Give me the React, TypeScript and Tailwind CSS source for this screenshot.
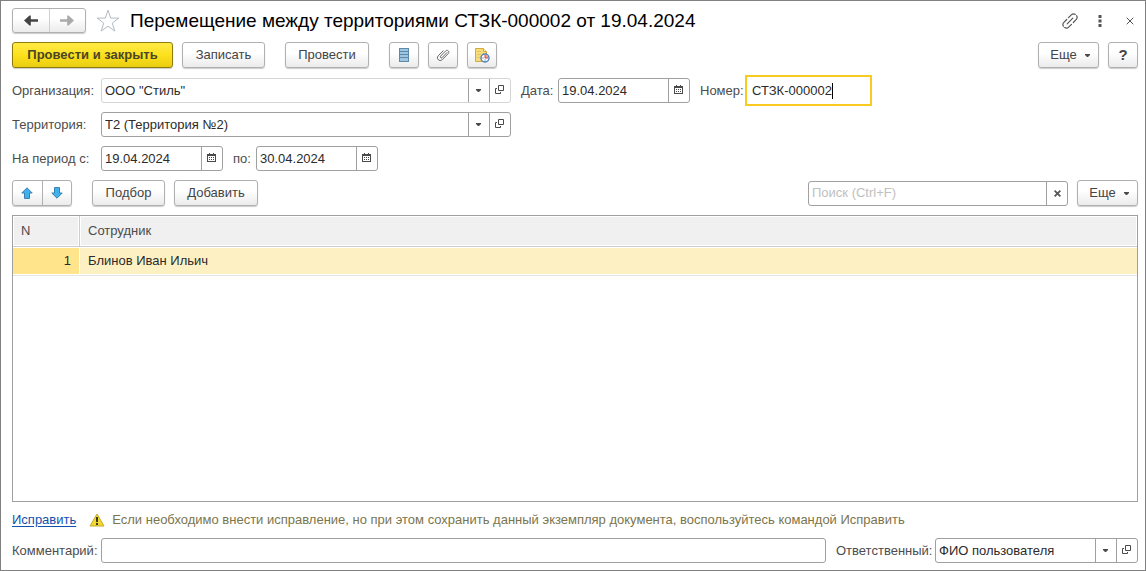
import type { ReactNode } from "react";
import { useState } from "react";
import clsx from "clsx";

type ButtonProps = {
  children: ReactNode;
  className?: string;
  label?: string;
  primary?: boolean;
};

type FieldProps = {
  id: string;
  label: string;
  value?: string;
  className?: string;
  labelClassName?: string;
  light?: boolean;
  children?: ReactNode;
};

const employees = [{ id: 1, name: "Блинов Иван Ильич" }];

function Button({ children, className, label, primary }: ButtonProps) {
  return (
    <button
      type="button"
      aria-label={label}
      className={clsx(
        "flex h-[26px] shrink-0 items-center justify-center whitespace-nowrap rounded-[3px] border shadow-[0_1px_1px_rgba(0,0,0,0.2)]",
        primary
          ? "border-[#8f7a0c] bg-linear-to-b from-[#ffea45] via-[#fde11c] to-[#e9cd12] font-bold text-[#4a4523]"
          : "border-[#b0b0b0] bg-linear-to-b from-white from-40% to-[#ebebeb] text-[#444]",
        className
      )}
    >
      {children}
    </button>
  );
}

function Field({ id, label, value = "", className, labelClassName, light, children }: FieldProps) {
  const [text, setText] = useState(value);

  return (
    <>
      <label htmlFor={id} className={clsx("shrink-0 whitespace-nowrap text-[#4c4c4c]", labelClassName)}>
        {label}
      </label>
      <div
        className={clsx(
          "flex h-[25px] rounded-[3px] border bg-white",
          light ? "border-[#d4d4d4]" : "border-[#a0a0a0]",
          className
        )}
      >
        <input
          id={id}
          type="text"
          value={text}
          onChange={(event) => setText(event.target.value)}
          className="min-w-0 flex-1 bg-transparent px-[3px] text-[#2b2b2b] outline-none"
        />
        {children}
      </div>
    </>
  );
}

function FieldButton({ label, children }: { label: string; children: ReactNode }) {
  return (
    <button
      type="button"
      aria-label={label}
      className="flex w-[21px] shrink-0 items-center justify-center border-l border-[#a0a0a0]"
    >
      {children}
    </button>
  );
}

function CaretIcon() {
  return (
    <svg width="6" height="3" viewBox="0 0 6 3" fill="#4a4a4a">
      <path d="M0 0h5v1L3 3H2L0 1z" />
    </svg>
  );
}

function OpenIcon() {
  return (
    <svg width="10" height="11" viewBox="0 0 10 11" fill="none" stroke="#4a4a4a">
      <path d="M3.500 .5h5v5h-5z" />
      <path d="M2 3.500H.5v5h5V7" />
    </svg>
  );
}

function CalendarIcon() {
  return (
    <svg width="10" height="11" viewBox="0 0 10 11" shapeRendering="crispEdges">
      <path d="M0 1h9v8H0zM2 0h1v1H2zM6 0h1v1H6z" fill="#4a4a4a" />
      <path d="M1 3h7v5H1z" fill="#fff" />
      <path d="M2 4h1v1H2zM4 4h1v1H4zM6 4h1v1H6zM2 6h1v1H2zM4 6h1v1H4zM6 6h1v1H6z" fill="#4a4a4a" />
    </svg>
  );
}

function ArrowIcon({ color, flip }: { color: string; flip?: boolean }) {
  return (
    <svg width="14" height="11" viewBox="0 0 14 11" fill={color} className={clsx(flip && "rotate-180")}>
      <path d="M0 5.500L5.500 .5h1.300V4.200H14v2.600H6.800v3.700H5.500z" />
    </svg>
  );
}

function MoveIcon({ flip }: { flip?: boolean }) {
  return (
    <svg width="12" height="12" viewBox="0 0 12 12" className={clsx(flip && "rotate-180")}>
      <path
        d="M6 .8l5.200 5.200H8.500v5.400h-5V6H.8z"
        fill="#3fb2ee"
        stroke="#3a7fae"
        strokeLinejoin="round"
      />
    </svg>
  );
}

function StarIcon() {
  return (
    <svg width="24" height="24" viewBox="0 0 24 24" fill="none" stroke="#b4bac0">
      <path d="M12 1.200l2.700 7.900h8.100l-6.500 5 2.500 7.900L12 17.200 5.200 22l2.500-7.900-6.500-5h8.100z" />
    </svg>
  );
}

function LinkIcon() {
  return (
    <svg width="16" height="16" viewBox="0 0 16 16" fill="none" stroke="#555" strokeWidth="1.200" strokeLinecap="round">
      <path d="M5.200 10.800l5.600-5.600" />
      <path d="M6.500 4.700l2.800-2.800c1.200-1.200 2.600-1.300 4-.5M14.600 2.700c.8 1.400.7 2.800-.5 4L11.300 9.500" />
      <path d="M9.500 11.300l-2.800 2.800c-1.200 1.200-2.600 1.300-4 .5M1.400 13.300c-.8-1.400-.7-2.800.5-4L4.700 6.500" />
    </svg>
  );
}

function CloseIcon({ size, width }: { size: number; width: number }) {
  return (
    <svg width={size} height={size} viewBox="0 0 8 8" stroke="#555" strokeWidth={width}>
      <path d="M.7 .7l6.600 6.600M7.300 .7L.7 7.300" />
    </svg>
  );
}

function ListIcon() {
  return (
    <svg width="10" height="14" viewBox="0 0 10 14" shapeRendering="crispEdges">
      <path d="M0 0h10v14H0z" fill="#5c8aab" />
      <path d="M1 1h8v2H1zM1 4h8v2H1zM1 7h8v2H1zM1 10h8v3H1z" fill="#a0c6df" />
    </svg>
  );
}

function ClipIcon() {
  return (
    <svg width="14" height="14" viewBox="0 0 14 14" fill="none" stroke="#666" strokeLinecap="round">
      <path d="M11 4.500L6 9.700c-.8.800-2.300-.6-1.500-1.500l5.200-5.300c1.700-1.700 4.300.8 2.600 2.600l-6 6.100c-2.700 2.700-6.700-1.100-4-3.900L7 2.900" />
    </svg>
  );
}

function ReportIcon() {
  return (
    <svg width="16" height="16" viewBox="0 0 16 16">
      <path d="M1.500 1.500h8l3 3v10h-11z" fill="#f8dc7c" stroke="#d3aa3c" />
      <path d="M9.500 1.500v3h3" fill="#fff3c0" stroke="#d3aa3c" />
      <path d="M3 4.500h4M3 7.500h4M3 10.500h3" stroke="#e3c465" />
      <circle cx="11" cy="11" r="4" fill="#fff" stroke="#4a7fb5" strokeWidth="1.400" />
      <path d="M11 11V7.800A3.200 3.200 0 0 1 14.200 11z" fill="#f3a39b" />
      <path d="M11 8v3h3" fill="none" stroke="#d8483c" />
      <path d="M8.500 11h1M11 12.500v1" stroke="#335f9a" />
    </svg>
  );
}

function WarningIcon() {
  return (
    <svg width="16" height="14" viewBox="0 0 16 14">
      <path d="M8 1l7 12H1z" fill="#f3d82f" stroke="#c5a92b" strokeLinejoin="round" />
      <path d="M7 4h2v5H7zM7 10h2v2H7z" fill="#3b3827" />
    </svg>
  );
}

function LookupButtons() {
  return (
    <>
      <FieldButton label="Выбрать">
        <CaretIcon />
      </FieldButton>
      <FieldButton label="Открыть">
        <OpenIcon />
      </FieldButton>
    </>
  );
}

function DateButton() {
  return (
    <FieldButton label="Календарь">
      <CalendarIcon />
    </FieldButton>
  );
}

function MoreButton() {
  return (
    <Button className="w-[61px] gap-2 pl-1">
      Еще
      <CaretIcon />
    </Button>
  );
}

function TitleBar() {
  return (
    <header className="mb-[9px] flex h-[25px] items-center">
      <div className="flex h-[25px] w-[74px] shrink-0 rounded-[3px] border border-[#b0b0b0] bg-linear-to-b from-white from-40% to-[#ebebeb] shadow-[0_1px_1px_rgba(0,0,0,0.2)]">
        <button type="button" aria-label="Назад" className="flex flex-1 items-center justify-center">
          <ArrowIcon color="#444" />
        </button>
        <button
          type="button"
          aria-label="Вперед"
          className="flex flex-1 items-center justify-center border-l border-[#d0d0d0]"
        >
          <ArrowIcon color="#aaa" flip />
        </button>
      </div>
      <button type="button" aria-label="Добавить в избранное" className="mx-[10px] shrink-0">
        <StarIcon />
      </button>
      <h1 className="min-w-0 flex-1 truncate text-[19px] leading-6 text-black">
        Перемещение между территориями СТЗК-000002 от 19.04.2024
      </h1>
      <div className="flex shrink-0 items-center pr-1">
        <button type="button" aria-label="Получить ссылку">
          <LinkIcon />
        </button>
        <button type="button" aria-label="Меню" className="mr-6 ml-5">
          <svg width="4" height="12" viewBox="0 0 4 12" fill="#555">
            <path d="M.5 0h3v3h-3zM.5 4.500h3v3h-3zM.5 9h3v3h-3z" />
          </svg>
        </button>
        <button type="button" aria-label="Закрыть">
          <CloseIcon size={8} width={1} />
        </button>
      </div>
    </header>
  );
}

function CommandBar() {
  return (
    <div className="mb-[10px] flex items-center">
      <Button primary className="w-[161px]">
        Провести и закрыть
      </Button>
      <Button className="ml-[9px] w-[83px]">Записать</Button>
      <Button className="mx-5 w-[84px]">Провести</Button>
      <div className="flex gap-[9px]">
        <Button label="Движения документа" className="w-[30px]">
          <ListIcon />
        </Button>
        <Button label="Присоединенные файлы" className="w-[30px]">
          <ClipIcon />
        </Button>
        <Button label="История" className="w-[30px]">
          <ReportIcon />
        </Button>
      </div>
      <div className="ml-auto flex gap-[9px]">
        <MoreButton />
        <Button className="w-[30px] text-[15px] font-bold text-[#222]">?</Button>
      </div>
    </div>
  );
}

function NumberField() {
  const [number, setNumber] = useState("СТЗК-000002");

  return (
    <>
      <label htmlFor="number" className="ml-[10px] w-12 shrink-0 whitespace-nowrap text-[#4c4c4c]">
        Номер:
      </label>
      <div className="relative flex h-[25px] w-[121px] items-center outline-2 outline-offset-1 outline-[#f9cb20]">
        <input
          id="number"
          type="text"
          value={number}
          onChange={(event) => setNumber(event.target.value)}
          className="w-full bg-transparent px-1 text-[#2b2b2b] caret-transparent outline-none"
        />
        <span className="absolute left-[84px] h-4 w-px bg-black" />
      </div>
    </>
  );
}

function DocumentForm() {
  return (
    <form className="flex flex-col gap-[9px]">
      <div className="flex items-center">
        <Field
          id="organization"
          label="Организация:"
          value={'ООО "Стиль"'}
          labelClassName="w-[89px]"
          className="w-[410px]"
          light
        >
          <LookupButtons />
        </Field>
        <Field
          id="date"
          label="Дата:"
          value="19.04.2024"
          labelClassName="ml-[10px] w-[37px]"
          className="w-[132px]"
        >
          <DateButton />
        </Field>
        <NumberField />
      </div>
      <div className="flex items-center">
        <Field
          id="territory"
          label="Территория:"
          value="Т2 (Территория №2)"
          labelClassName="w-[89px]"
          className="w-[410px]"
        >
          <LookupButtons />
        </Field>
      </div>
      <div className="flex items-center">
        <Field
          id="period-from"
          label="На период с:"
          value="19.04.2024"
          labelClassName="w-[89px]"
          className="w-[122px]"
        >
          <DateButton />
        </Field>
        <Field
          id="period-to"
          label="по:"
          value="30.04.2024"
          labelClassName="ml-[10px] w-[23px]"
          className="w-[122px]"
        >
          <DateButton />
        </Field>
      </div>
    </form>
  );
}

function SearchField() {
  const [query, setQuery] = useState("");

  return (
    <div className="flex h-[25px] w-[260px] rounded-[3px] border border-[#a0a0a0] bg-white">
      <input
        type="text"
        aria-label="Поиск"
        placeholder="Поиск (Ctrl+F)"
        value={query}
        onChange={(event) => setQuery(event.target.value)}
        className="min-w-0 flex-1 bg-transparent px-[3px] text-[#2b2b2b] outline-none placeholder:text-[#c0c0c0]"
      />
      <FieldButton label="Очистить">
        <CloseIcon size={7} width={2} />
      </FieldButton>
    </div>
  );
}

function TableToolbar() {
  return (
    <div className="my-[9px] flex items-center gap-[9px]">
      <div className="mr-[11px] flex h-[26px] w-[60px] rounded-[3px] border border-[#b0b0b0] bg-linear-to-b from-white from-40% to-[#ebebeb] shadow-[0_1px_1px_rgba(0,0,0,0.2)]">
        <button type="button" aria-label="Переместить вверх" className="flex flex-1 items-center justify-center">
          <MoveIcon />
        </button>
        <button
          type="button"
          aria-label="Переместить вниз"
          className="flex flex-1 items-center justify-center border-l border-[#b0b0b0]"
        >
          <MoveIcon flip />
        </button>
      </div>
      <Button className="w-[73px]">Подбор</Button>
      <Button className="w-[84px]">Добавить</Button>
      <div className="ml-auto flex items-center gap-[9px]">
        <SearchField />
        <MoreButton />
      </div>
    </div>
  );
}

function EmployeeTable() {
  return (
    <div className="flex-1 border border-[#a0a0a0] bg-white">
      <table className="w-full table-fixed border-separate border-spacing-0 text-left">
        <thead>
          <tr className="text-[#4c4c4c]">
            <th className="w-[67px] border-r border-b border-[#ccc] p-px font-normal">
              <div className="flex h-7 items-center bg-[#f0f0f0] px-[7px]">N</div>
            </th>
            <th className="border-b border-[#ccc] p-px font-normal">
              <div className="flex h-7 items-center bg-[#f0f0f0] px-[7px]">Сотрудник</div>
            </th>
          </tr>
        </thead>
        <tbody>
          {employees.map((employee) => (
            <tr key={employee.id} className="text-[#2b2b2b]">
              <td className="border-b border-[#e4e4e4] py-px pr-px">
                <div className="flex h-[26px] items-center justify-end bg-[#ffe48c] px-2">{employee.id}</div>
              </td>
              <td className="border-b border-[#e4e4e4] py-px">
                <div className="flex h-[26px] items-center bg-[#fdf1c4] px-2">{employee.name}</div>
              </td>
            </tr>
          ))}
        </tbody>
      </table>
    </div>
  );
}

function Footer() {
  return (
    <footer>
      <div className="flex h-9 items-center">
        <a href="#fix" className="text-[#1350ad] underline underline-offset-2">
          Исправить
        </a>
        <span className="ml-[13px] mr-[7px] shrink-0">
          <WarningIcon />
        </span>
        <p className="text-[#7b754d]">
          Если необходимо внести исправление, но при этом сохранить данный экземпляр документа, воспользуйтесь
          командой Исправить
        </p>
      </div>
      <div className="flex items-center">
        <Field id="comment" label="Комментарий:" labelClassName="w-[89px]" className="min-w-0 flex-1" />
        <Field
          id="responsible"
          label="Ответственный:"
          value="ФИО пользователя"
          labelClassName="ml-[10px] w-[99px]"
          className="w-[203px]"
        >
          <LookupButtons />
        </Field>
      </div>
    </footer>
  );
}

export default function App() {
  return (
    <main className="flex min-h-screen flex-col border border-[#808080] bg-white pt-[7px] pr-[7px] pb-[7px] pl-[11px] font-['Liberation_Sans',Arial,sans-serif] text-[13px] leading-4">
      <TitleBar />
      <CommandBar />
      <DocumentForm />
      <TableToolbar />
      <EmployeeTable />
      <Footer />
    </main>
  );
}
